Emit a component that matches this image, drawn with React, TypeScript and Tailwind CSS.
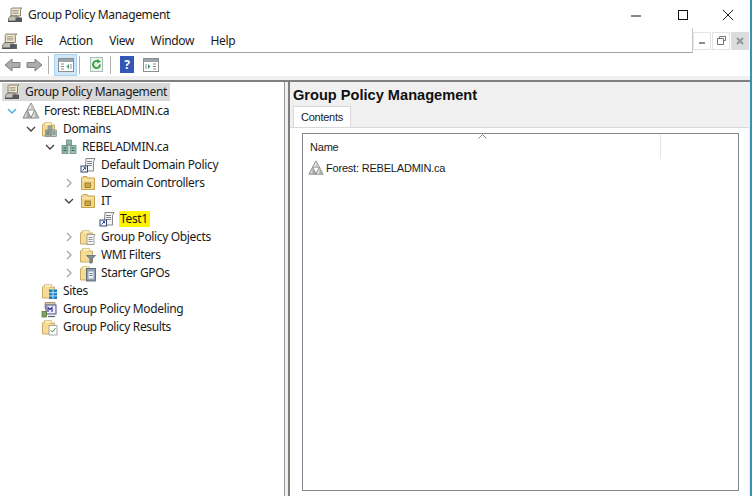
import React from "react";

function Console({ s = 16 }: { s?: number }) {
  return (
    <svg width={s} height={s} viewBox="0 0 16 16" className="shrink-0">
      <path d="M5 1h10c-1 .5-1.500 1.200-1.500 2v6H4V3c0-1-.3-1.500 1-2z" fill="#f1e8cc" stroke="#6d6a5c" strokeWidth="0.8" />
      <path d="M5.500 3.500h6M5.500 5h6M5.500 6.500h6" stroke="#8d8a7c" strokeWidth="0.7" />
      <path d="M1.500 11.500L3.500 9h7l2 2.500V14h-11z" fill="#c4c1b1" stroke="#5d5d5d" strokeWidth="0.8" />
      <rect x="8.500" y="10.500" width="6.500" height="4.500" fill="#54585e" />
      <path d="M1 14.500h8" stroke="#3f4a50" strokeWidth="1" />
    </svg>
  );
}
function Forest({ s = 18 }: { s?: number }) {
  return (
    <svg width={s} height={s} viewBox="0 0 18 18" className="shrink-0">
      <path d="M9 1l3.800 7H5.200z" fill="#ececec" stroke="#858585" />
      <path d="M9 1l3.800 7H9z" fill="#c2c2c2" />
      <path d="M5.200 8l4 8H1z" fill="#d2d2d2" stroke="#858585" />
      <path d="M5.200 8l4 8H5.200z" fill="#a2a2a2" />
      <path d="M12.800 8l4.200 8H8.800z" fill="#e2e2e2" stroke="#858585" />
      <path d="M12.800 8l4.200 8h-4.200z" fill="#b0b0b0" />
    </svg>
  );
}
function Folder({ children }: { children?: React.ReactNode }) {
  return (
    <svg width="18" height="17" viewBox="0 0 18 17" className="shrink-0">
      <path d="M1.500 4V15h12V4H8L7 2.500H3z" fill="#f5dc96" stroke="#c6a45a" strokeWidth="0.9" />
      <path d="M3.500 4V1.500h7V4" fill="#fbeebd" stroke="#d3b673" strokeWidth="0.7" />
      {children}
    </svg>
  );
}
function OU() {
  return (
    <svg width="16" height="16" viewBox="0 0 16 16" className="shrink-0">
      <path d="M1.500 3V14.500H14.500V3H8L7 1.500H3z" fill="#f3d684" stroke="#c9a24f" />
      <path d="M2 5H14" stroke="#fcf0c4" />
      <rect x="5" y="8" width="5.500" height="4.500" fill="#cfa73f" stroke="#7d6a30" strokeWidth="0.7" />
    </svg>
  );
}
function Gpo() {
  return (
    <svg width="16" height="16" viewBox="0 0 16 16" className="shrink-0">
      <path d="M6 1.500h9l-1.500 3V14H5z" fill="#f4f4f4" stroke="#77797d" strokeWidth="0.9" />
      <path d="M7 4.500h5M7 6.500h5M7 8.500h5" stroke="#70757c" strokeWidth="0.9" />
      <rect x="1" y="9" width="6.500" height="6" fill="#fff" stroke="#33436d" />
      <path d="M2.500 13.500L5.500 10.600M3.800 10.600h1.700v1.700" stroke="#2a3f9a" fill="none" />
    </svg>
  );
}
function Domain() {
  return (
    <svg width="16" height="16" viewBox="0 0 16 16" className="shrink-0">
      <rect x="5.500" y="1" width="5" height="5" fill="#8fb7a0" stroke="#5e7f74" strokeWidth="0.7" />
      <rect x="1" y="6.500" width="6" height="8" fill="#8db79d" stroke="#5e7f74" strokeWidth="0.7" />
      <rect x="9" y="6.500" width="6" height="8" fill="#9cc3ae" stroke="#5e7f74" strokeWidth="0.7" />
      <path d="M2.500 9h3M2.500 11.500h3M10.500 9h3M10.500 11.500h3" stroke="#2b5d6f" />
    </svg>
  );
}
const DomainsIcon = () => (
  <Folder>
    <rect x="7" y="5" width="4" height="4" fill="#9aaca4" stroke="#6d7f78" strokeWidth="0.6" />
    <rect x="4.500" y="9" width="5" height="6.500" fill="#9aaca4" stroke="#6d7f78" strokeWidth="0.6" />
    <rect x="10.500" y="9" width="5" height="6.500" fill="#bcc6c0" stroke="#6d7f78" strokeWidth="0.6" />
    <path d="M5.500 11h3M5.500 13h3M11.500 11h3M11.500 13h3" stroke="#4c686c" strokeWidth="0.8" />
  </Folder>
);
const GpoFolder = () => (
  <Folder>
    <path d="M8 5.500h8l-1 2v8H8z" fill="#f7f7f7" stroke="#8a8a8a" strokeWidth="0.8" />
    <path d="M9.500 8.500h4M9.500 10.500h4M9.500 12.500h4" stroke="#777" strokeWidth="0.8" />
  </Folder>
);
const WmiFolder = () => (
  <Folder>
    <path d="M7.500 8.500h9l-3.400 3.500v4h-2.200v-4z" fill="#7e8f9b" stroke="#56636d" strokeWidth="0.7" />
  </Folder>
);
const StarterFolder = () => (
  <Folder>
    <rect x="7.500" y="3.500" width="9" height="12.500" fill="#8fa0b4" stroke="#4d5a6a" strokeWidth="0.8" />
    <rect x="9.500" y="6.500" width="5" height="7" fill="#eef1f5" />
    <path d="M10.500 8.500h3M10.500 10.500h3" stroke="#4d5a6a" strokeWidth="0.8" />
  </Folder>
);
const SitesFolder = () => (
  <Folder>
    <rect x="8" y="6.500" width="8" height="9.500" fill="#1780c4" />
    <path d="M8 9.700h8M8 12.900h8M12 6.500V16" stroke="#e8f4fb" strokeWidth="0.8" />
  </Folder>
);
const Modeling = () => (
  <svg width="18" height="17" viewBox="0 0 18 17" className="shrink-0">
    <path d="M4 1.500h10v6H4z" fill="#d7c99c" stroke="#8d8468" strokeWidth="0.8" />
    <rect x="5" y="4" width="10" height="9" fill="#e9ecf4" stroke="#4a4f85" />
    <path d="M7 11V6.500l2 2 2-2V11" stroke="#2c2f9a" fill="none" strokeWidth="1.100" />
    <rect x="1" y="10.500" width="4.500" height="5.500" fill="#7fa35b" stroke="#566f3e" strokeWidth="0.7" />
    <path d="M7 15.500h7" stroke="#5b5f72" strokeWidth="1.200" />
  </svg>
);
const Results = () => (
  <Folder>
    <path d="M8 6.500h8V16H8z" fill="#fff" stroke="#8a8f94" strokeWidth="0.8" />
    <path d="M9.500 11l2 2 3-4" stroke="#3f8f5a" fill="none" />
  </Folder>
);

function Chevron({ kind }: { kind?: "open" | "closed" | "blue" }) {
  return (
    <span className="w-[14px] h-[14px] flex items-center justify-center shrink-0">
      {kind === "closed" && (
        <svg width="8" height="10" viewBox="0 0 8 10"><path d="M2 1l4 4-4 4" fill="none" stroke="#a6a6a6" strokeWidth="1.300" /></svg>
      )}
      {kind === "open" && (
        <svg width="10" height="8" viewBox="0 0 10 8"><path d="M1 2l4 4 4-4" fill="none" stroke="#404040" strokeWidth="1.300" /></svg>
      )}
      {kind === "blue" && (
        <svg width="10" height="8" viewBox="0 0 10 8"><path d="M1 2l4 4 4-4" fill="none" stroke="#4db4dc" strokeWidth="1.500" /></svg>
      )}
    </span>
  );
}

type R = { t: string; d: number; k?: "open" | "closed" | "blue"; i: React.ReactNode; hl?: boolean };
const rows: R[] = [
  { t: "Forest: REBELADMIN.ca", d: 0, k: "blue", i: <Forest /> },
  { t: "Domains", d: 1, k: "open", i: <DomainsIcon /> },
  { t: "REBELADMIN.ca", d: 2, k: "open", i: <Domain /> },
  { t: "Default Domain Policy", d: 3, i: <Gpo /> },
  { t: "Domain Controllers", d: 3, k: "closed", i: <OU /> },
  { t: "IT", d: 3, k: "open", i: <OU /> },
  { t: "Test1", d: 4, i: <Gpo />, hl: true },
  { t: "Group Policy Objects", d: 3, k: "closed", i: <GpoFolder /> },
  { t: "WMI Filters", d: 3, k: "closed", i: <WmiFolder /> },
  { t: "Starter GPOs", d: 3, k: "closed", i: <StarterFolder /> },
  { t: "Sites", d: 1, i: <SitesFolder /> },
  { t: "Group Policy Modeling", d: 1, i: <Modeling /> },
  { t: "Group Policy Results", d: 1, i: <Results /> },
];
const pad: Record<number, string> = { 0: "pl-[5px]", 1: "pl-[24px]", 2: "pl-[43px]", 3: "pl-[62px]", 4: "pl-[81px]" };

function Row({ r }: { r: R }) {
  return (
    <div className={`h-[18px] flex items-center ${pad[r.d]}`}>
      <Chevron kind={r.k} />
      <span className="w-[18px] h-[18px] flex items-center justify-center ml-[3px] shrink-0">{r.i}</span>
      <span className={`ml-[3px] pl-[1px] leading-[16px] whitespace-nowrap ${r.hl ? "bg-[#fdf500] pr-[2px]" : "pr-[1px]"}`}>{r.t}</span>
    </div>
  );
}

const arial = '"Liberation Sans", Arial, sans-serif';

export default function App() {
  return (
    <div
      className="w-[752px] h-[496px] overflow-hidden flex flex-col bg-white text-[12px] text-[#1a1a1a] border-r-2 border-r-[#3a8fb5]"
      style={{ fontFamily: '"Noto Sans", "Open Sans", sans-serif', letterSpacing: "-0.35px" }}
    >
      <div className="h-[30px] flex items-center pl-[7px] shrink-0">
        <Console />
        <span className="ml-[5px] text-[12px]">Group Policy Management</span>
        <div className="ml-auto flex items-center">
          <svg width="12" height="12" viewBox="0 0 12 12" className="mr-[34px]"><path d="M0 7h10" stroke="#111" /></svg>
          <svg width="12" height="12" viewBox="0 0 12 12" className="mr-[33px]"><rect x="1.500" y="1.500" width="9" height="9" fill="none" stroke="#111" /></svg>
          <svg width="12" height="12" viewBox="0 0 12 12" className="mr-[16px]"><path d="M1 1l10 10M11 1L1 11" stroke="#222" /></svg>
        </div>
      </div>

      <div className="h-[23px] flex items-center shrink-0 border-b border-b-[#a0a0a0] relative pl-[1px]">
        <Console s={17} />
        <div className="flex ml-[7px] gap-[16.5px]">
          <span>File</span>
          <span>Action</span>
          <span>View</span>
          <span>Window</span>
          <span>Help</span>
        </div>
        <div className="absolute right-0 top-[-2px] h-[25px] w-[58px] bg-white border-l border-l-[#c8c8c8] flex items-center justify-end pr-[1px] gap-[1px]">
          <span className="w-[18px] h-[18px] border border-[#e4e4e4] flex items-center justify-center">
            <span className="w-[6px] h-[2px] mt-[5px] bg-[#8a9095]" />
          </span>
          <span className="w-[18px] h-[18px] border border-[#e4e4e4] flex items-center justify-center">
            <svg width="9" height="9" viewBox="0 0 9 9"><path d="M2.500 2.500V.5h6v4h-2M.5 2.500h6v6h-6z" fill="none" stroke="#70757a" /></svg>
          </span>
          <span className="w-[18px] h-[18px] bg-[#dcdcdc] flex items-center justify-center">
            <svg width="8" height="8" viewBox="0 0 8 8"><path d="M1 1l6 6M7 1L1 7" stroke="#8f979d" strokeWidth="2" /></svg>
          </span>
        </div>
      </div>

      <div className="h-[23px] flex items-center shrink-0 pl-[4px]">
        <svg width="17" height="14" viewBox="0 0 17 14"><path d="M8 1L1 7l7 6V9.500h8v-5H8z" fill="#a9adae" stroke="#7f8384" /></svg>
        <svg width="17" height="14" viewBox="0 0 17 14" className="ml-[5px]"><path d="M9 1l7 6-7 6V9.500H1v-5h8z" fill="#a9adae" stroke="#7f8384" /></svg>
        <span className="w-px h-[18px] bg-[#b0b0b0] ml-[5px]" />
        <span className="w-[23px] h-[22px] ml-[5px] bg-[#cfe6f9] border border-[#a9d3f2] flex items-center justify-center">
          <svg width="16" height="14" viewBox="0 0 16 14"><rect x=".5" y=".5" width="15" height="13" fill="#fff" stroke="#8a8f92" /><rect x="1" y="1" width="14" height="3" fill="#9ca5a8" /><path d="M3 6h3M3 8.500h3M3 11h3" stroke="#7c8a8c" /><path d="M11 6v5L8.500 8.500z" fill="#3f9a68" /><path d="M13 6v5" stroke="#8a8f92" /></svg>
        </span>
        <span className="w-px h-[18px] bg-[#b0b0b0] ml-[2px]" />
        <span className="w-[13px] h-[15px] ml-[10px] bg-[#eaf4ea] border border-[#a8c0b8] flex items-center justify-center">
          <svg width="11" height="11" viewBox="0 0 11 11"><path d="M9 5.500A3.500 3.500 0 1 1 7.500 2.600" fill="none" stroke="#3da24a" strokeWidth="2" /><path d="M6 0l4 2.500-3.500 2z" fill="#3da24a" /></svg>
        </span>
        <span className="w-px h-[18px] bg-[#b0b0b0] ml-[7px]" />
        <span className="w-[14px] h-[17px] ml-[9px] bg-[#3456b4] text-white font-bold text-[12px] leading-[17px] text-center">?</span>
        <svg width="16" height="14" viewBox="0 0 16 14" className="ml-[9px]"><rect x=".5" y=".5" width="15" height="13" fill="#fff" stroke="#8a8f92" /><rect x="1" y="1" width="14" height="3" fill="#9ca5a8" /><path d="M10 6h3M10 8.500h3M10 11h3" stroke="#7c8a8c" /><path d="M5 6v5l2.500-2.500z" fill="#3f9a68" /><path d="M3 6v5" stroke="#8a8f92" /></svg>
      </div>

      <div className="h-[6px] shrink-0 bg-[#f0f0f0] border-b-2 border-b-[#7f7f7f]" />

      <div className="flex-1 flex min-h-0">
        <div className="w-[285px] shrink-0 border-r border-r-[#9a9a9a] pt-px">
          <div className="h-[18px] w-[168px] ml-[2px] bg-[#d9d9d9] flex items-center pl-[2px] mb-[1px] whitespace-nowrap">
            <Console />
            <span className="ml-[5px]">Group Policy Management</span>
          </div>
          {rows.map((r) => (
            <Row key={r.t + r.d} r={r} />
          ))}
        </div>
        <div className="w-[3px] shrink-0 bg-[#f0f0f0]" />
        <div className="flex-1 flex flex-col min-w-0 border-l-2 border-l-[#7f7f7f] bg-[#f0f0f0]">
          <div className="h-[24px] flex items-end pl-[3px] shrink-0">
            <span className="text-[14.6px] font-bold text-[#111] leading-[22px] tracking-normal" style={{ fontFamily: arial }}>
              Group Policy Management
            </span>
          </div>
          <div className="h-[21px] pl-[3px] flex items-end shrink-0 relative z-10">
            <div className="h-[21px] w-[58px] bg-white border border-[#d9d9d9] border-b-0 flex items-center justify-center">
              <span className="text-[11px] leading-[18px] -mt-[1px]" style={{ fontFamily: arial, letterSpacing: "-0.25px" }}>Contents</span>
            </div>
          </div>
          <div className="flex-1 min-h-0 bg-white border-t border-t-[#d9d9d9] mr-[1px] pt-[5px] pl-[12px] pr-[10px] pb-[5px] flex">
            <div className="flex-1 border border-[#828790] flex flex-col text-[11px]" style={{ fontFamily: arial, letterSpacing: "-0.2px" }}>
              <div className="h-[26px] flex items-center relative shrink-0 pl-[7px]">
                <span>Name</span>
                <svg width="9" height="5" viewBox="0 0 9 5" className="absolute left-[175px] top-[0px]"><path d="M.5 4.500l4-4 4 4" fill="none" stroke="#888" /></svg>
                <span className="absolute left-[357px] top-0 h-[25px] w-px bg-[#e5e5e5]" />
              </div>
              <div className="flex items-center pl-[5px] h-[18px] mt-[-1px]">
                <Forest s={16} />
                <span className="ml-[2px]">Forest: REBELADMIN.ca</span>
              </div>
            </div>
          </div>
        </div>
      </div>
    </div>
  );
}
